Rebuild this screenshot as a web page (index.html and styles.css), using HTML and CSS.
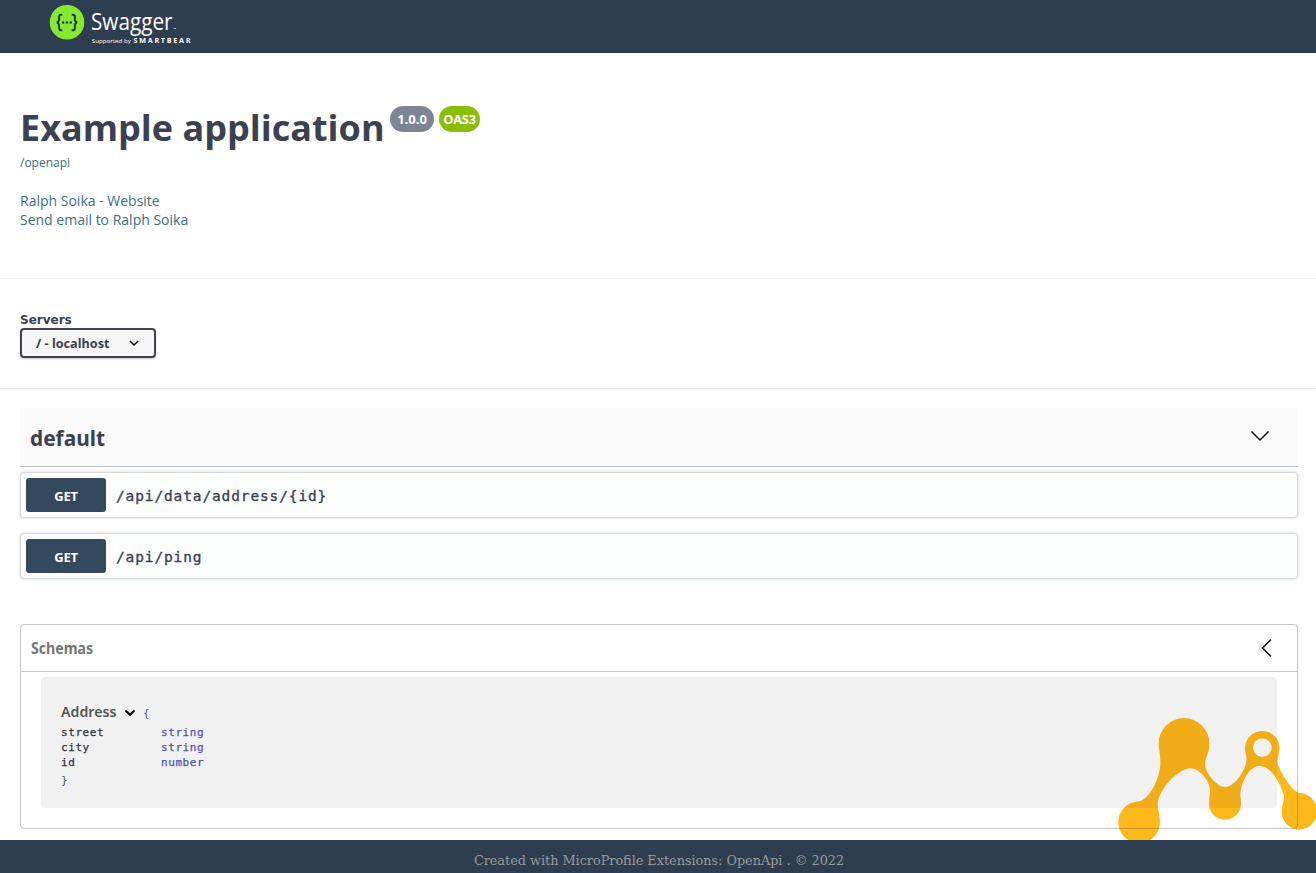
FILE: index.html
```
<!DOCTYPE html>
<html lang="en">
<head>
<meta charset="utf-8">
<title>Example application</title>
<link rel="stylesheet" href="styles.css">
</head>
<body>
<header class="topbar">
  <svg class="logo" width="145" height="48" viewBox="0 0 145 48">
    <circle cx="19" cy="22.300" r="17.300" fill="#85ea2d"/>
    <g fill="none" stroke="#173647" stroke-width="1.900">
      <path d="M14.300 14.800h-1.200q-2 0-2 2v2.400q0 2.800-2.200 3.300q2.200.500 2.200 3.300v2.400q0 2 2 2h1.200M23.700 14.800h1.200q2 0 2 2v2.400q0 2.800 2.200 3.300q-2.200.500-2.200 3.300v2.400q0 2-2 2h-1.200"/>
    </g>
    <g fill="#173647"><circle cx="15.200" cy="22.500" r="1.200"/><circle cx="19" cy="22.500" r="1.200"/><circle cx="22.800" cy="22.500" r="1.200"/></g>
    <text class="logo-name" x="43" y="29.500" textLength="81.500" lengthAdjust="spacingAndGlyphs">Swagger</text>
    <path d="M125.500 28.500h2.500" stroke="#9aa5b1" stroke-width="1"/>
    <text class="logo-by" x="43.800" y="43" textLength="39" lengthAdjust="spacingAndGlyphs">Supported by</text>
    <text class="logo-bear" x="85.500" y="43" textLength="57">SMARTBEAR</text>
  </svg>
</header>
<main class="page">
  <section class="info">
    <div class="title-row">
      <h1 class="title">Example application</h1>
      <span class="badge version"><span class="badge-text">1.0.0</span></span>
      <span class="badge oas"><span class="badge-text">OAS3</span></span>
    </div>
    <a class="spec-link">/openapi</a>
    <div class="contact"><a>Ralph Soika - Website</a><a>Send email to Ralph Soika</a></div>
  </section>
  <section class="servers">
    <span class="servers-label">Servers</span>
    <div class="select">
      <svg width="80" height="20"><text class="cond" x="0" y="15" textLength="73.500" lengthAdjust="spacingAndGlyphs">/ - localhost</text></svg>
      <svg class="select-arrow" width="10" height="7" viewBox="0 0 10 7"><path d="M.800 1l4.200 4 4.200-4" fill="none" stroke="#111" stroke-width="1.600"/></svg>
    </div>
  </section>
  <section class="operations">
    <div class="tag">
      <svg width="90" height="36"><text class="tag-name" x="0" y="28" textLength="75" lengthAdjust="spacingAndGlyphs">default</text></svg>
      <svg width="20" height="12" viewBox="0 0 20 12"><path d="M1.500 1.500l8.500 8.500 8.500-8.500" fill="none" stroke="#111" stroke-width="1.500"/></svg>
    </div>
    <div class="op"><span class="method"><span class="method-text">GET</span></span><span class="path">/api/data/address/{id}</span></div>
    <div class="op"><span class="method"><span class="method-text">GET</span></span><span class="path">/api/ping</span></div>
  </section>
  <section class="schemas">
    <div class="schemas-head">
      <svg width="80" height="24"><text class="schemas-name" x="0" y="18" textLength="62" lengthAdjust="spacingAndGlyphs">Schemas</text></svg>
      <svg width="12" height="20" viewBox="0 0 12 20"><path d="M11 1.500l-8.500 8.500 8.500 8.500" fill="none" stroke="#111" stroke-width="1.500"/></svg>
    </div>
    <div class="model">
      <div class="model-head">
        <svg width="58" height="24"><text class="model-name" x="0" y="16" textLength="55.500" lengthAdjust="spacingAndGlyphs">Address</text></svg>
        <svg class="model-arrow" width="12" height="8" viewBox="0 0 12 8"><path d="M1.500 1.500l4.500 4.300 4.500-4.300" fill="none" stroke="#000" stroke-width="2"/></svg>
        <span class="brace">{</span>
      </div>
      <div class="props">
        <span>street</span><span class="type">string</span>
        <span>city</span><span class="type">string</span>
        <span>id</span><span class="type">number</span>
      </div>
      <div class="brace close">}</div>
    </div>
  </section>
</main>
<svg class="watermark" width="216" height="130" viewBox="0 300 648 390">
  <path fill="#ffb819" fill-rule="evenodd" d="M117 574C145 571 180 510 181 460C181 430 176 420 176 400A76 76 0 0 1 328 400C328 435 315 440 315 465C318 490 350 531 377 531C405 531 440 475 440 445C437 430 435 425 435 415A52 52 0 0 1 539 415C539 430 531 440 533 460C538 480 575 545 598 549A53 55 0 1 1 545 606C545 585 555 570 551 553C545 535 520 468 478 468C440 470 419 535 421 560C423 570 423 575 423 581A48 48 0 0 1 327 581C327 570 330 555 330 540C330 515 300 475 270 475C230 478 172 545 173 585C174 600 180 615 180 637A62.500 62.500 0 0 1 55 637C55 605 80 576 117 574ZM515 413A28 28 0 1 0 459 413A28 28 0 1 0 515 413Z"/>
</svg>
<footer class="footer">Created with MicroProfile Extensions: OpenApi . © 2022</footer>
</body>
</html>
```
FILE: styles.css
```
* { box-sizing: border-box; }
body {
  margin: 0;
  height: 873px;
  overflow: hidden;
  display: flex;
  flex-direction: column;
  position: relative;
  background: #fff;
  color: #3b4151;
  font-family: "Open Sans", sans-serif;
}
svg { display: block; flex: none; }
.topbar { height: 53px; flex: none; background: #2d3e50; padding-left: 48px; }
.logo text { fill: #fff; }
.logo .logo-name { font: 400 23.500px "Open Sans", sans-serif; }
.logo .logo-by { font: 400 6px "Open Sans", sans-serif; }
.logo .logo-bear { font: 700 7.200px "Open Sans", sans-serif; }
.page { height: 787px; flex: none; position: relative; z-index: 1; }
.info { height: 226px; padding: 50px 20px 0; border-bottom: 1px solid #f6f6f7; }
.title-row { display: flex; align-items: flex-start; height: 51px; }
.title { margin: 0; font-size: 36px; line-height: 49px; font-weight: 700; width: 370px; white-space: nowrap; }
.badge {
  display: flex; align-items: center; justify-content: center;
  height: 26px; margin-top: 3px; border-radius: 13px;
  color: #fff; font-size: 13px; font-weight: 700; background: #7d8492;
}
.version { width: 44px; }
.oas { width: 41px; margin-left: 5px; background: #89bf04; }
.badge-text { letter-spacing: -.3px; }
.version .badge-text { letter-spacing: 0; }
.spec-link { display: block; font-size: 12px; line-height: 18px; color: #3b7080; }
.contact { display: flex; flex-direction: column; margin-top: 19px; font-size: 14px; line-height: 19px; color: #3b7080; }
.servers { height: 109px; padding: 33px 20px 0; box-shadow: 0 1px 2px rgba(0,0,0,.15); }
.servers-label { display: block; font: 700 12px/16px "DejaVu Sans", sans-serif; }
.select {
  width: 136px; height: 30px; display: flex; align-items: center;
  border: 2px solid #41444e; border-radius: 4px; background: #f7f7f7;
  box-shadow: 0 1px 2px rgba(0,0,0,.25); padding-left: 14px;
}
.select-arrow { margin-left: 13px; }
.cond { font: 700 13px "Noto Sans", sans-serif; fill: #3b4151; }
.operations { padding: 20px 18px 0 20px; height: 236px; }
.tag {
  height: 59px; display: flex; align-items: center; justify-content: space-between;
  padding: 0 28px 2px 10px; background: #fafafa; border-bottom: 1px solid #bfc0ca; margin-bottom: 5px;
}
.tag-name { font: 700 22px "Noto Sans", sans-serif; fill: #3b4151; }
.op {
  height: 46px; display: flex; align-items: center; padding-left: 5px; margin-bottom: 15px;
  border: 1px solid #d6dcde; border-radius: 4px; background: #fcfefe; box-shadow: 0 0 3px rgba(0,0,0,.19);
}
.method {
  width: 80px; height: 34px; border-radius: 3px; background: #34495e; color: #fff;
  display: flex; align-items: center; justify-content: center; font-size: 13px; font-weight: 700;
}
.method-text { letter-spacing: -.3px; padding-top: 1px; }
.path { margin-left: 10px; padding-top: 2px; font: 400 14.500px "DejaVu Sans Mono", monospace; letter-spacing: .870px; -webkit-text-stroke: .35px #3b4151; }
.schemas { margin: 0 18px 0 20px; height: 205px; border: 1px solid rgba(59,65,81,.3); border-radius: 4px; }
.schemas-head {
  height: 47px; display: flex; align-items: center; justify-content: space-between;
  padding: 0 25px 0 10px; border-bottom: 1px solid rgba(59,65,81,.3);
}
.schemas-name { font: 700 15.500px "Noto Sans", sans-serif; fill: #767676; }
.model { margin: 5px 20px 0; height: 131px; padding: 24px 20px 0; background: rgba(0,0,0,.055); border-radius: 4px; }
.model-head { display: flex; height: 24px; align-items: flex-start; }
.model-name { font: 600 15px "Noto Sans", sans-serif; fill: #555; }
.model-arrow { margin: 8px 7px 0 5px; }
.brace { font: 400 11px/25px "DejaVu Sans Mono", monospace; color: #505566; }
.brace.close { line-height: 21px; }
.props {
  display: grid; grid-template-columns: 100px auto; grid-auto-rows: 15px;
  font: 400 11px/15px "DejaVu Sans Mono", monospace; letter-spacing: .580px; color: #2d3140; -webkit-text-stroke: .25px;
}
.type { color: #5555aa; }
.watermark { position: absolute; left: 1100px; top: 710px; z-index: 0; }
.footer {
  height: 33px; flex: none; background: #2d3e50; color: #999;
  font: 400 12.800px/42px "DejaVu Serif", serif; text-align: center; padding-left: 2px; overflow: hidden; position: relative; z-index: 2;
}
```
